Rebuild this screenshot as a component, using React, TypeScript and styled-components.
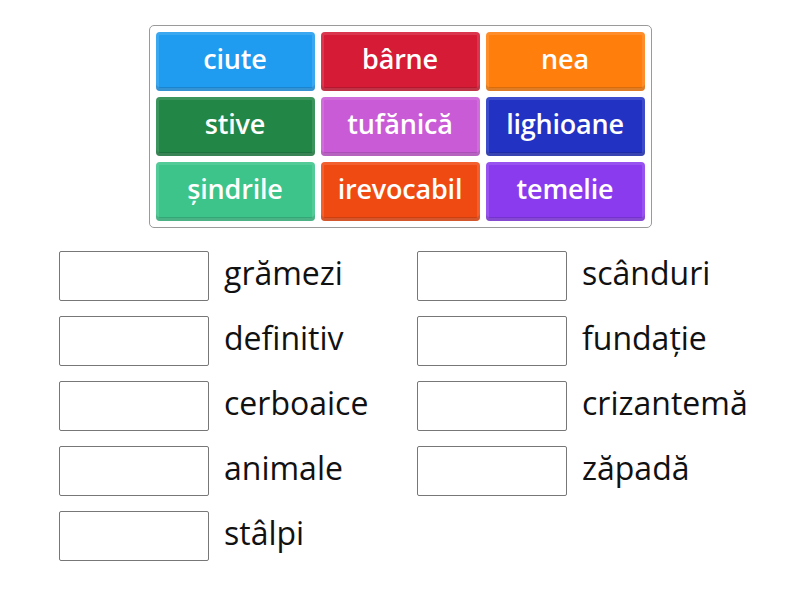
import React from "react";
import styled, { createGlobalStyle } from "styled-components";

const Global = createGlobalStyle`
  html, body { margin: 0; padding: 0; background: #ffffff; }
  body { font-family: "Open Sans", sans-serif; }
`;

const Page = styled.div`
  width: 800px;
  height: 600px;
  display: flex;
  flex-direction: column;
  align-items: center;
  padding-top: 25px;
  box-sizing: border-box;
`;

const Bank = styled.div`
  display: grid;
  grid-template-columns: repeat(3, 159px);
  grid-auto-rows: 59px;
  gap: 6px;
  padding: 6px;
  border: 1px solid #9a9a9a;
  border-radius: 5px;
  background: #fff;
`;

const Tile = styled.div<{ $bg: string }>`
  background: ${(p) => p.$bg};
  border-radius: 4px;
  display: flex;
  align-items: center;
  justify-content: center;
  color: #ffffff;
  font-family: "Open Sans", sans-serif;
  font-weight: 600;
  font-size: 27px;
  letter-spacing: -0.2px;
  padding-bottom: 7px;
  box-sizing: border-box;
  box-shadow: inset 0 0 0 3px rgba(255, 255, 255, 0.12),
    inset 0 -4px 0 rgba(0, 0, 0, 0.14);
`;

const Targets = styled.div`
  align-self: stretch;
  display: grid;
  grid-template-columns: 358px 358px;
  grid-auto-rows: 50px;
  row-gap: 15px;
  padding-left: 59px;
  margin-top: 23px;
`;

const Row = styled.div`
  display: flex;
  align-items: center;
  gap: 15px;
`;

const Slot = styled.div`
  width: 150px;
  height: 50px;
  box-sizing: border-box;
  border: 1px solid #777;
  border-radius: 2px;
  background: #fff;
  flex: none;
`;

const Label = styled.span`
  font-family: "Open Sans", sans-serif;
  font-size: 32px;
  color: #111;
  padding-bottom: 8px;
`;

const tiles: [string, string][] = [
  ["ciute", "#1f9bf0"],
  ["bârne", "#d51b36"],
  ["nea", "#ff7e0c"],
  ["stive", "#228647"],
  ["tufănică", "#c95bd6"],
  ["lighioane", "#2233c4"],
  ["șindrile", "#3cc48a"],
  ["irevocabil", "#ef4a12"],
  ["temelie", "#8a3bee"],
];

const left = ["grămezi", "definitiv", "cerboaice", "animale", "stâlpi"];
const right = ["scânduri", "fundație", "crizantemă", "zăpadă"];

export default function App() {
  const rows: (string | null)[] = [];
  for (let i = 0; i < left.length; i++) {
    rows.push(left[i]);
    rows.push(right[i] ?? null);
  }
  return (
    <Page>
      <Global />
      <Bank>
        {tiles.map(([t, c]) => (
          <Tile key={t} $bg={c}>
            {t}
          </Tile>
        ))}
      </Bank>
      <Targets>
        {rows.map((w, i) =>
          w ? (
            <Row key={i}>
              <Slot />
              <Label>{w}</Label>
            </Row>
          ) : (
            <div key={i} />
          )
        )}
      </Targets>
    </Page>
  );
}
